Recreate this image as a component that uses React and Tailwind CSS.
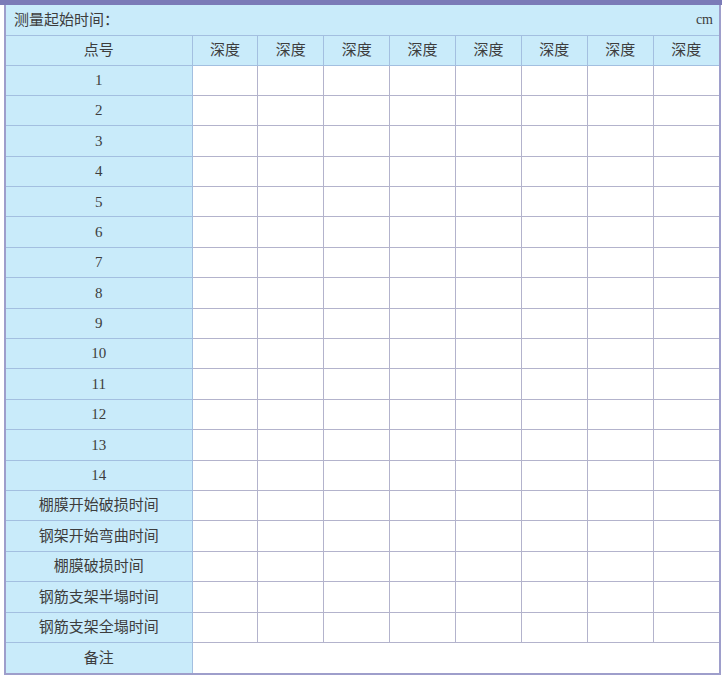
import React from "react";

const points = ["1", "2", "3", "4", "5", "6", "7", "8", "9", "10", "11", "12", "13", "14"];
const events = ["棚膜开始破损时间", "钢架开始弯曲时间", "棚膜破损时间", "钢筋支架半塌时间", "钢筋支架全塌时间"];
const cols = [0, 1, 2, 3, 4, 5, 6, 7];

const App = () => {
  const font = { fontFamily: '"Liberation Serif", "Noto Sans CJK SC", serif' };

  return (
    <div className="w-[722px] h-[678px] bg-white text-[#3d3d3d]" style={font}>
      <div className="h-[5px] bg-[#7b7bb7]" />
      <div className="ml-[4px] w-[717px] border-x-2 border-b-2 border-[#9e9ecb]">
        <table className="w-full border-collapse table-fixed text-[15px]">
          <colgroup>
            <col className="w-[186px]" />
            {cols.map((c) => (
              <col key={c} />
            ))}
          </colgroup>
          <tbody>
            <tr className="h-[30px] bg-[#c9ebfa]">
              <td colSpan={9} className="border-b border-[#a3bfe0] pl-[8px] pr-[6px]">
                <div className="flex items-center justify-between">
                  <span>测量起始时间：</span>
                  <span className="text-[14px]">cm</span>
                </div>
              </td>
            </tr>
            <tr className="h-[30px] bg-[#c9ebfa]">
              <td className="text-center border-r border-b border-[#a3bfe0]">点号</td>
              {cols.map((c) => (
                <td key={c} className="text-center border-r last:border-r-0 border-b border-[#a3bfe0]">
                  深度
                </td>
              ))}
            </tr>
            {[...points, ...events].map((label) => (
              <tr key={label} className="h-[30.4px]">
                <td className="text-center bg-[#c9ebfa] border-r border-b border-[#a3bfe0]">{label}</td>
                {cols.map((c) => (
                  <td key={c} className="border-r last:border-r-0 border-b border-[#b3b3cc]" />
                ))}
              </tr>
            ))}
            <tr className="h-[30.4px]">
              <td className="text-center bg-[#c9ebfa] border-r border-[#a3bfe0]">备注</td>
              <td colSpan={8} />
            </tr>
          </tbody>
        </table>
      </div>
    </div>
  );
};

export default App;
